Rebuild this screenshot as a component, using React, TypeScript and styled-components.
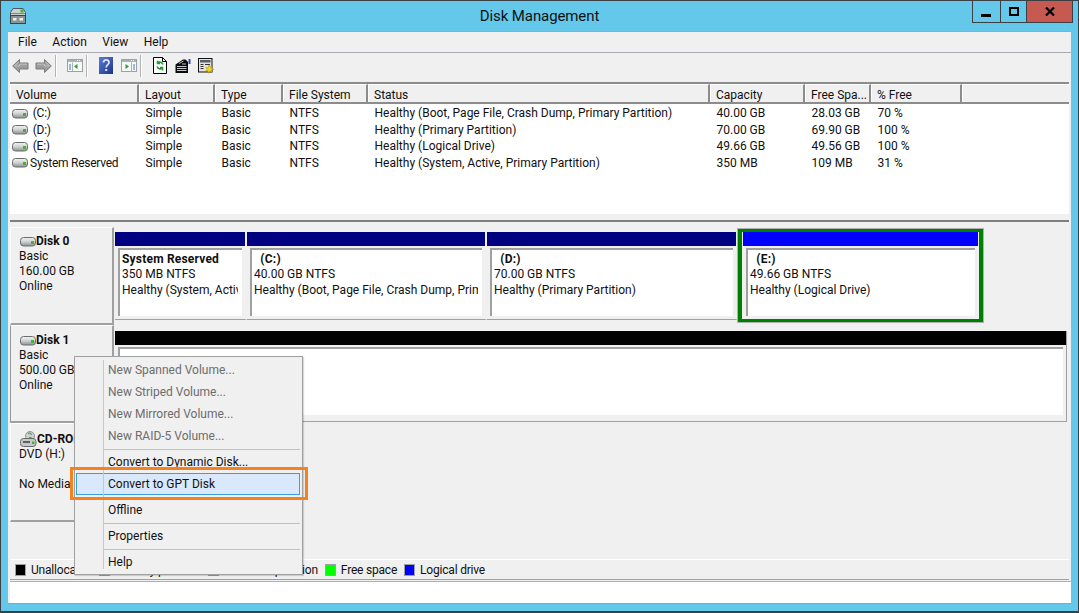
import React from 'react';
import styled, { createGlobalStyle } from 'styled-components';

const GlobalStyle = createGlobalStyle`
  html, body {
    margin: 0;
    padding: 0;
  }
  body {
    font-family: Roboto, "Noto Sans", sans-serif;
    font-size: 12px;
    color: #101010;
    overflow: hidden;
  }
`;

const columnTemplate = '129px 76px 68px 85px 342px 95px 66px 91px 1fr';

const headers = ['Volume', 'Layout', 'Type', 'File System', 'Status', 'Capacity', 'Free Spa...', '% Free', ''];

const volumes = [
  [' (C:)', 'Simple', 'Basic', 'NTFS', 'Healthy (Boot, Page File, Crash Dump, Primary Partition)', '40.00 GB', '28.03 GB', '70 %'],
  [' (D:)', 'Simple', 'Basic', 'NTFS', 'Healthy (Primary Partition)', '70.00 GB', '69.90 GB', '100 %'],
  [' (E:)', 'Simple', 'Basic', 'NTFS', 'Healthy (Logical Drive)', '49.66 GB', '49.56 GB', '100 %'],
  ['System Reserved', 'Simple', 'Basic', 'NTFS', 'Healthy (System, Active, Primary Partition)', '350 MB', '109 MB', '31 %'],
];

const partitions = [
  { name: 'System Reserved', size: '350 MB NTFS', state: 'Healthy (System, Active, Primary Partition)', width: 132 },
  { name: '  (C:)', size: '40.00 GB NTFS', state: 'Healthy (Boot, Page File, Crash Dump, Primary Partition)', width: 240 },
  { name: '  (D:)', size: '70.00 GB NTFS', state: 'Healthy (Primary Partition)', width: 251 },
];

const legend = [
  { color: '#000000', label: 'Unallocated' },
  { color: '#000080', label: 'Primary partition' },
  { color: '#008000', label: 'Extended partition' },
  { color: '#00ff00', label: 'Free space' },
  { color: '#0000ff', label: 'Logical drive' },
];

const Frame = styled.div`
  box-sizing: border-box;
  width: 1079px;
  height: 613px;
  display: flex;
  flex-direction: column;
  background: #63c8ea;
  border: 1px solid #3b4045;
  border-bottom-width: 2px;
`;

const TitleBar = styled.header`
  height: 30px;
  display: grid;
  grid-template-columns: 1fr auto 1fr;
  flex: none;
`;

const AppIcon = styled.svg`
  width: 16px;
  height: 16px;
  margin: 7px 0 0 9px;
`;

const Title = styled.h1`
  margin: 6px 0 0;
  font-size: 15px;
  font-weight: 400;
  letter-spacing: -0.1px;
  line-height: 18px;
  color: #111;
`;

const WindowControls = styled.div`
  justify-self: end;
  display: flex;
  height: 21px;
  margin-right: 5px;
  border: 1px solid #3b4045;
  border-top: 0;
`;

const ControlButton = styled.div<{ $w: number; $close?: boolean }>`
  width: ${(p) => p.$w}px;
  display: flex;
  align-items: center;
  justify-content: center;
  background: ${(p) => (p.$close ? '#c75a50' : 'transparent')};
  & + & {
    border-left: 1px solid #3b4045;
  }
`;

const Client = styled.main`
  position: relative;
  flex: none;
  box-sizing: border-box;
  width: 1063px;
  height: 573px;
  margin-left: 7px;
  display: flex;
  flex-direction: column;
  background: #f0f0f0;
  border-top: 1px solid #7ab4cc;
`;

const MenuBar = styled.nav`
  height: 21px;
  flex: none;
  display: flex;
  align-items: center;
  padding-left: 10px;
  box-sizing: border-box;
  gap: 15.5px;
  border-bottom: 1px solid #a9a9b4;
`;

const MenuLabel = styled.span`
  line-height: 18px;
`;

const Toolbar = styled.div`
  height: 29px;
  flex: none;
  box-sizing: border-box;
  display: flex;
  align-items: center;
  padding: 0 0 4px 1px;
`;

const ToolButton = styled.div`
  width: 23px;
  height: 23px;
  display: flex;
  align-items: center;
  justify-content: center;
`;

const ToolSeparator = styled.div`
  width: 2px;
  height: 22px;
  margin-right: 6px;
  background: #b4b4b4;
  border-right: 1px solid #fff;
  box-sizing: border-box;
`;

const ListView = styled.section`
  flex: none;
  height: 130px;
  margin: 0 2px;
  display: flex;
  flex-direction: column;
  background: #fff;
  border-top: 2px solid #8c8c8c;
  border-bottom: 6px solid #f0f0f0;
`;

const HeaderRow = styled.div`
  display: grid;
  grid-template-columns: ${columnTemplate};
  height: 18px;
  flex: none;
  background: #f0f0f0;
  border-bottom: 2px solid #8c8c8c;
`;

const HeaderCell = styled.div`
  box-sizing: border-box;
  padding-left: 5px;
  line-height: 20px;
  white-space: nowrap;
  overflow: hidden;
  border-left: 1px solid #fff;
  border-top: 1px solid #fff;
  border-right: 2px solid #8c8c8c;
  &:last-child {
    border-right: 0;
  }
`;

const VolumeRow = styled.div`
  display: grid;
  grid-template-columns: ${columnTemplate};
  height: 16.67px;
`;

const VolumeCell = styled.div`
  padding-left: 6.5px;
  line-height: 18px;
  white-space: pre;
`;

const NameCell = styled.div`
  display: flex;
  align-items: center;
  gap: 2px;
  padding-left: 2px;
  line-height: 18px;
  letter-spacing: -0.25px;
  white-space: pre;
`;

const DriveSvg = styled.svg`
  flex: none;
  width: 16px;
  height: 11px;
`;

const CdSvg = styled.svg`
  flex: none;
  width: 17px;
  height: 16px;
`;

const GraphView = styled.section`
  flex: none;
  height: 339px;
  margin: 0 2px;
  box-sizing: border-box;
  border-top: 2px solid #7f7f7f;
  padding-top: 5px;
`;

const DiskRow = styled.div<{ $h: number }>`
  display: flex;
  height: ${(p) => p.$h}px;
`;

const DiskInfo = styled.div<{ $top: number; $sunken?: boolean }>`
  box-sizing: border-box;
  width: 104px;
  flex: none;
  padding: ${(p) => p.$top}px 0 0 8px;
  line-height: 15px;
  background: #f0f0f0;
  border-left: 1px solid ${(p) => (p.$sunken ? '#9a9a9a' : '#fff')};
  border-top: 1px solid #fff;
  border-right: 2px solid #a0a0a0;
  border-bottom: 2px solid #a0a0a0;
`;

const DiskName = styled.div`
  display: flex;
  align-items: center;
  height: 16px;
  padding-left: 1px;
  font-weight: 700;
`;

const DiskLine = styled.div<{ $gap?: boolean }>`
  margin-top: ${(p) => (p.$gap ? 15 : 0)}px;
`;

const DiskTrack = styled.div<{ $top: number }>`
  flex: 1;
  display: flex;
  padding: ${(p) => p.$top}px 0 0 1px;
`;

const Partition = styled.div<{ $w: number; $h: number; $edged?: boolean }>`
  box-sizing: border-box;
  width: ${(p) => p.$w}px;
  height: ${(p) => p.$h}px;
  flex: none;
  border-right: ${(p) => (p.$edged ? '1px solid #a0a0a0' : '2px solid #f0f0f0')};
  border-bottom: 1px solid #a0a0a0;
`;

const SelectedPartition = styled.div`
  box-sizing: border-box;
  width: 245px;
  height: 93px;
  flex: none;
  margin-top: -3px;
  padding: 0 1px;
  border: 3px solid #008000;
  border-left-width: 4px;
  border-right-width: 4px;
  outline: 1px solid #b0b0b0;
`;

const PartitionBar = styled.div<{ $color: string }>`
  height: 14px;
  background: ${(p) => p.$color};
`;

const PartitionBody = styled.div`
  box-sizing: border-box;
  height: 68px;
  margin: 2px 3px 0;
  padding: 1.5px 4px 0 2px;
  background: #fff;
  border-top: 2px solid #a0a0a0;
  border-left: 2px solid #a0a0a0;
`;

const PartitionText = styled.div`
  line-height: 15.5px;
  overflow: hidden;
  white-space: pre;
`;

const PartitionName = styled.div`
  font-weight: 700;
  letter-spacing: 0.2px;
  white-space: pre;
`;

const LegendBar = styled.footer`
  flex: none;
  height: 21px;
  box-sizing: border-box;
  margin: 0 2px;
  display: flex;
  align-items: center;
  padding-left: 5px;
  border-top: 1px solid #fff;
  border-bottom: 1px solid #a0a0a0;
`;

const LegendItem = styled.div`
  display: flex;
  align-items: center;
  margin-right: 7px;
  letter-spacing: -0.2px;
`;

const Swatch = styled.span<{ $color: string }>`
  box-sizing: border-box;
  width: 11px;
  height: 12px;
  margin-right: 5px;
  background: ${(p) => p.$color};
  border: 1px solid #a0a0a0;
`;

const StatusBar = styled.div`
  flex: 1;
  margin: 1px 0 0 2px;
  background: #fff;
  border-top: 1px solid #b0b0b0;
`;

const BottomEdge = styled.div`
  height: 1px;
  background: #a0a0a0;
`;

const ContextMenu = styled.div`
  position: absolute;
  left: 66px;
  top: 324px;
  box-sizing: border-box;
  width: 229px;
  height: 219px;
  padding: 2px 2px 0 1px;
  background: #f0f0f0;
  border: 1px solid #a0a0a0;
  box-shadow: 1px 1px 1px rgba(0, 0, 0, 0.15);
  &::before {
    content: '';
    position: absolute;
    left: 28px;
    top: 3px;
    bottom: 5px;
    width: 1px;
    background: #c8c8c8;
  }
`;

const MenuItem = styled.div<{ $disabled?: boolean; $active?: boolean }>`
  box-sizing: border-box;
  height: 22px;
  padding-left: 31px;
  line-height: 20px;
  color: ${(p) => (p.$disabled ? '#6d6d6d' : '#101010')};
  background: ${(p) => (p.$active ? '#d9e8fb' : 'transparent')};
  border: 1px solid ${(p) => (p.$active ? '#3aa0d6' : 'transparent')};
`;

const MenuRule = styled.div`
  height: 1px;
  margin: 2px 0 1px 28px;
  background: #c0c0c0;
`;

const Callout = styled.div`
  position: absolute;
  left: -5px;
  top: 110px;
  width: 238px;
  height: 33px;
  box-sizing: border-box;
  border: 3px solid #f58220;
`;

const DriveIcon = () => (
  <DriveSvg viewBox="0 0 16 11">
    <defs>
      <linearGradient id="driveBody" x1="0" y1="0" x2="0" y2="1">
        <stop offset="0" stopColor="#f2f2f2" />
        <stop offset="0.45" stopColor="#d4d6d6" />
        <stop offset="1" stopColor="#8e9292" />
      </linearGradient>
    </defs>
    <rect x="0.5" y="1.5" width="15" height="8.5" rx="3" fill="url(#driveBody)" stroke="#6a6e6e" />
    <rect x="11" y="5" width="3" height="3" fill="#3eb52e" />
  </DriveSvg>
);

const CdIcon = () => (
  <CdSvg viewBox="0 0 17 16">
    <circle cx="10" cy="5" r="4.5" fill="#c9d2cf" stroke="#7c8482" strokeWidth="0.8" />
    <path d="M8 2.5c1.5-1 3 0 3.5 1.5M9 6.5h2.5" stroke="#4d9a58" strokeWidth="1.1" fill="none" />
    <rect x="0.5" y="7.5" width="15.5" height="8" rx="3" fill="#c6c9c9" stroke="#666a6a" />
    <rect x="3" y="10" width="7" height="2" fill="#5e6262" />
    <rect x="12" y="10.5" width="2.5" height="2.5" fill="#3eb52e" />
  </CdSvg>
);

const ArrowIcon = ({ flip }: { flip?: boolean }) => (
  <svg width="17" height="14" viewBox="0 0 17 14" style={{ transform: flip ? 'scaleX(-1)' : undefined }}>
    <path d="M7.5.5 .7 7l6.8 6.5V10H16V4H7.5z" fill="#9c9c9c" stroke="#7c7c7c" />
    <path d="M6.5 3 2.5 7h5V5.2H15" fill="none" stroke="#c4c4c4" />
  </svg>
);

const PaneIcon = ({ right }: { right?: boolean }) => (
  <svg width="16" height="13" viewBox="0 0 16 13">
    <rect x="0.5" y="0.5" width="15" height="12" fill="#f6f8f8" stroke="#9aa2a8" />
    <rect x="1" y="1" width="14" height="2" fill="#aab2b8" />
    <path d="M10 1.5h1M12 1.5h1" stroke="#f6f8f8" />
    <path d={right ? 'M10.5 3.5v9' : 'M5.5 3.5v9'} stroke="#aab2b8" />
    <path d={right ? 'M4.5 5v5L8 7.5z' : 'M10.5 5v5L7 7.5z'} fill="#2f9a3a" />
    <path d={right ? 'M12 6h2M12 8h2M12 10h2' : 'M2 6h2M2 8h2M2 10h2'} stroke="#4a78b8" />
  </svg>
);

const HelpIcon = () => (
  <svg width="14" height="17" viewBox="0 0 14 17">
    <defs>
      <linearGradient id="helpFill" x1="0" y1="0" x2="1" y2="1">
        <stop offset="0" stopColor="#5b7cd6" />
        <stop offset="1" stopColor="#1c3488" />
      </linearGradient>
    </defs>
    <rect x="0" y="0" width="14" height="17" fill="url(#helpFill)" />
    <path d="M4.5 5.5c0-3.5 5.5-3.5 5.5 0 0 2.2-2.8 2.2-2.8 5" fill="none" stroke="#dfe6f8" strokeWidth="1.8" />
    <rect x="6.2" y="12" width="2" height="2" fill="#dfe6f8" />
  </svg>
);

const RefreshIcon = () => (
  <svg width="14" height="17" viewBox="0 0 14 17">
    <path d="M.5.5h9l4 4v12H.5z" fill="#fff" stroke="#000" />
    <path d="M9.5.5v4h4" fill="none" stroke="#000" />
    <path d="M10 7.5A3.4 3.4 0 0 0 4.5 6M4.5 3.8V6.5H7" fill="none" stroke="#1f9a2e" strokeWidth="1.5" />
    <path d="M4 9.5A3.4 3.4 0 0 0 9.5 11M9.5 13.4V10.6H7" fill="none" stroke="#1f9a2e" strokeWidth="1.5" />
  </svg>
);

const PropertiesIcon = () => (
  <svg width="16" height="16" viewBox="0 0 16 16">
    <path d="M.5 6.5 8 1.5h2.5L13 4v11H.5z" fill="#0c0c0c" />
    <path d="M2 8.5h9.5M2 10.5h9.5M2 12.5h9.5" stroke="#c6c9cd" />
    <path d="M4 5.5 8.5 3M7 6h4" stroke="#b9bcc0" />
    <rect x="13.5" y="1" width="2" height="5" fill="#2b4ea8" />
  </svg>
);

const WizardIcon = () => (
  <svg width="16" height="16" viewBox="0 0 16 16">
    <rect x="0.5" y="0.5" width="13.5" height="13.5" fill="#e4e4dc" stroke="#111" />
    <rect x="2" y="2" width="10.5" height="2.5" fill="#55606a" />
    <path d="M2.5 6.5h3M2.5 8.5h3M2.5 10.5h3M7 6.5h5" stroke="#333" />
    <path d="M11 6.8l1.1 2.2 2.2-1-.8 2.3 2.3 1-2.3.8.6 2.4-2.2-1.2-1.4 2-.5-2.4-2.4.2 1.6-1.8-1.5-1.7 2.4.1z" fill="#f4d51a" stroke="#8a7a10" strokeWidth="0.4" />
  </svg>
);

const ServerIcon = () => (
  <AppIcon viewBox="0 0 16 16">
    <path d="M3 .5h10l2.5 4v3H.5v-3z" fill="#ccd2d2" stroke="#4f5658" />
    <rect x="10.5" y="1.5" width="3" height="3" fill="#3eb52e" />
    <path d="M1 5.5h14" stroke="#7d8487" />
    <rect x="0.5" y="7.5" width="15" height="8" fill="#8d9496" stroke="#3e4446" />
    <rect x="3" y="10" width="3.5" height="2.5" fill="#eef0f0" />
    <rect x="9.5" y="10" width="3.5" height="2.5" fill="#eef0f0" />
  </AppIcon>
);

export default function App() {
  return (
    <>
      <GlobalStyle />
      <Frame>
        <TitleBar>
          <ServerIcon />
          <Title>Disk Management</Title>
          <WindowControls>
            <ControlButton $w={27}>
              <svg width="11" height="11" viewBox="0 0 11 11">
                <rect x="0" y="8" width="10" height="3" fill="#000" />
              </svg>
            </ControlButton>
            <ControlButton $w={25}>
              <svg width="10" height="9" viewBox="0 0 10 9">
                <rect x="1" y="1" width="8" height="7" fill="none" stroke="#000" strokeWidth="2" />
              </svg>
            </ControlButton>
            <ControlButton $w={45} $close>
              <svg width="10" height="9" viewBox="0 0 10 9">
                <path d="M1 .5 9 8.5M9 .5 1 8.5" stroke="#000" strokeWidth="2.2" />
              </svg>
            </ControlButton>
          </WindowControls>
        </TitleBar>
        <Client>
          <MenuBar>
            <MenuLabel>File</MenuLabel>
            <MenuLabel>Action</MenuLabel>
            <MenuLabel>View</MenuLabel>
            <MenuLabel>Help</MenuLabel>
          </MenuBar>
          <Toolbar>
            <ToolButton><ArrowIcon /></ToolButton>
            <ToolButton><ArrowIcon flip /></ToolButton>
            <ToolSeparator />
            <ToolButton><PaneIcon /></ToolButton>
            <ToolSeparator />
            <ToolButton><HelpIcon /></ToolButton>
            <ToolButton><PaneIcon right /></ToolButton>
            <ToolSeparator />
            <ToolButton><RefreshIcon /></ToolButton>
            <ToolButton><PropertiesIcon /></ToolButton>
            <ToolButton><WizardIcon /></ToolButton>
          </Toolbar>
          <ListView>
            <HeaderRow>
              {headers.map((h, i) => (
                <HeaderCell key={i}>{h}</HeaderCell>
              ))}
            </HeaderRow>
            {volumes.map((row) => (
              <VolumeRow key={row[0]}>
                <NameCell>
                  <DriveIcon />
                  {row[0]}
                </NameCell>
                {row.slice(1).map((cell, i) => (
                  <VolumeCell key={i}>{cell}</VolumeCell>
                ))}
              </VolumeRow>
            ))}
          </ListView>
          <GraphView>
            <DiskRow $h={98}>
              <DiskInfo $top={5}>
                <DiskName><DriveIcon />Disk 0</DiskName>
                <DiskLine>Basic</DiskLine>
                <DiskLine>160.00 GB</DiskLine>
                <DiskLine>Online</DiskLine>
              </DiskInfo>
              <DiskTrack $top={5}>
                {partitions.map((p) => (
                  <Partition key={p.name} $w={p.width} $h={88}>
                    <PartitionBar $color="#000080" />
                    <PartitionBody>
                      <PartitionText>
                        <PartitionName>{p.name}</PartitionName>
                        <div>{p.size}</div>
                        <div>{p.state}</div>
                      </PartitionText>
                    </PartitionBody>
                  </Partition>
                ))}
                <SelectedPartition>
                  <PartitionBar $color="#0000ff" />
                  <PartitionBody>
                    <PartitionText>
                      <PartitionName>  (E:)</PartitionName>
                      <div>49.66 GB NTFS</div>
                      <div>Healthy (Logical Drive)</div>
                    </PartitionText>
                  </PartitionBody>
                </SelectedPartition>
              </DiskTrack>
            </DiskRow>
            <DiskRow $h={98}>
              <DiskInfo $top={6} $sunken>
                <DiskName><DriveIcon />Disk 1</DiskName>
                <DiskLine>Basic</DiskLine>
                <DiskLine>500.00 GB</DiskLine>
                <DiskLine>Online</DiskLine>
              </DiskInfo>
              <DiskTrack $top={6}>
                <Partition $w={952} $h={91} $edged>
                  <PartitionBar $color="#000000" />
                  <PartitionBody />
                </Partition>
              </DiskTrack>
            </DiskRow>
            <DiskRow $h={99}>
              <DiskInfo $top={7}>
                <DiskName><CdIcon />CD-ROM 0</DiskName>
                <DiskLine>DVD (H:)</DiskLine>
                <DiskLine $gap>No Media</DiskLine>
              </DiskInfo>
            </DiskRow>
          </GraphView>
          <LegendBar>
            {legend.map((l) => (
              <LegendItem key={l.label}>
                <Swatch $color={l.color} />
                {l.label}
              </LegendItem>
            ))}
          </LegendBar>
          <StatusBar />
          <BottomEdge />
          <ContextMenu>
            <MenuItem $disabled>New Spanned Volume...</MenuItem>
            <MenuItem $disabled>New Striped Volume...</MenuItem>
            <MenuItem $disabled>New Mirrored Volume...</MenuItem>
            <MenuItem $disabled>New RAID-5 Volume...</MenuItem>
            <MenuRule />
            <MenuItem>Convert to Dynamic Disk...</MenuItem>
            <MenuItem $active>Convert to GPT Disk</MenuItem>
            <MenuRule />
            <MenuItem>Offline</MenuItem>
            <MenuRule />
            <MenuItem>Properties</MenuItem>
            <MenuRule />
            <MenuItem>Help</MenuItem>
            <Callout />
          </ContextMenu>
        </Client>
      </Frame>
    </>
  );
}
